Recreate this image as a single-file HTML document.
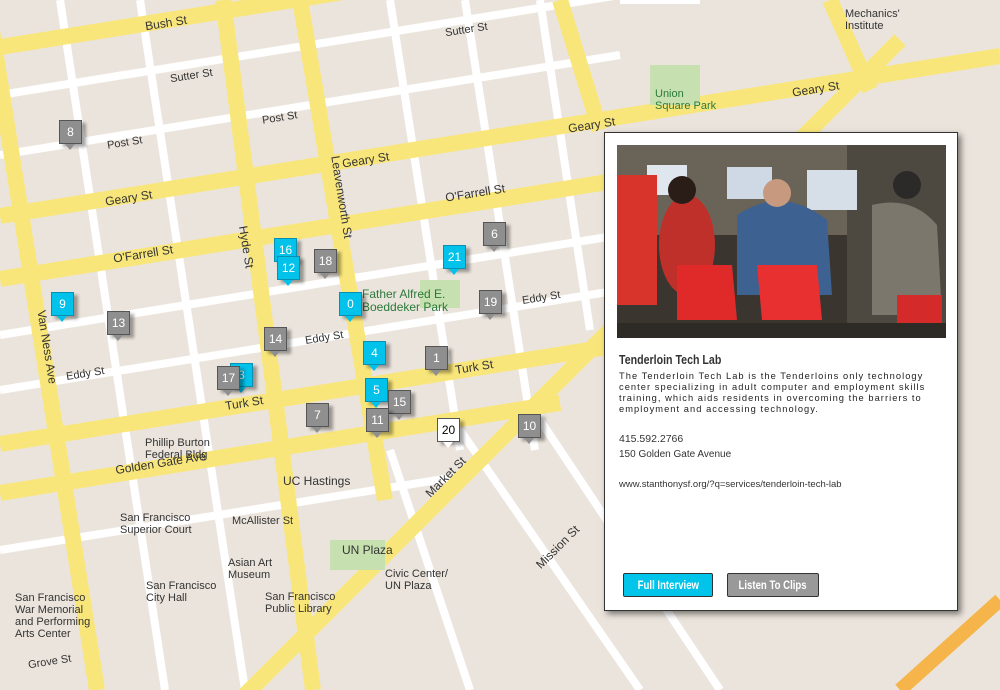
<!DOCTYPE html>
<html><head><meta charset="utf-8"><style>
body{margin:0;width:1000px;height:690px;overflow:hidden;background:#ebe4dc;font-family:"Liberation Sans",sans-serif;position:relative}
svg.map{position:absolute;left:0;top:0}
.m{position:absolute;width:23px;height:24px;border:1px solid #555;box-sizing:border-box;color:#fff;font-size:12px;text-align:center;line-height:23px;box-shadow:4px 3px 3px rgba(0,0,0,.35)}
.m:after{content:"";position:absolute;left:5px;bottom:-7px;width:0;height:0;border-left:5px solid transparent;border-right:5px solid transparent;border-top-width:6px;border-top-style:solid}
.g{background:#8f8f8f}.g:after{border-top-color:#8f8f8f}
.c{background:#00c2ea;border-color:#0a8fb0}.c:after{border-top-color:#00c2ea}
.w{background:#fff;color:#000}.w:after{border-top-color:#fff}
.lbl{position:absolute;font-size:11px;color:#333;white-space:nowrap}
#panel{position:absolute;left:604px;top:132px;width:354px;height:479px;background:#fff;border:1px solid #333;box-sizing:border-box;box-shadow:3px 3px 6px rgba(0,0,0,.5)}
.btn{position:absolute;top:440px;height:22px;border:1px solid #333;border-radius:2px;color:#fff;font-weight:bold;font-size:12px;line-height:22px;text-align:center;overflow:hidden}
.btn span{display:inline-block;transform:scaleX(.8)}
</style></head><body>
<svg class="map" width="1000" height="690">
<g stroke="#fff" stroke-width="8" fill="none">
<line x1="0" y1="95" x2="620" y2="-5"/><line x1="0" y1="155" x2="620" y2="55"/>
<line x1="0" y1="335" x2="620" y2="235"/><line x1="0" y1="390" x2="620" y2="290"/>
<line x1="0" y1="550" x2="450" y2="478"/>
<line x1="60" y1="0" x2="165" y2="690"/><line x1="140" y1="0" x2="245" y2="690"/>
<line x1="390" y1="0" x2="460" y2="450"/><line x1="465" y1="0" x2="535" y2="450"/><line x1="540" y1="0" x2="590" y2="330"/>
<line x1="390" y1="450" x2="470" y2="690"/><line x1="460" y1="430" x2="640" y2="690"/><line x1="540" y1="420" x2="720" y2="690"/>
<line x1="620" y1="0" x2="700" y2="0"/>
</g>
<g stroke="#f9e67a" stroke-width="16" fill="none" stroke-linecap="butt">
<line x1="0" y1="47" x2="630" y2="-54"/>
<line x1="0" y1="216" x2="1000" y2="56"/>
<line x1="0" y1="279" x2="620" y2="180"/>
<line x1="0" y1="444" x2="620" y2="345"/>
<line x1="0" y1="493" x2="560" y2="403"/>
<line x1="-13" y1="0" x2="97" y2="690"/>
<line x1="223" y1="0" x2="313" y2="690"/>
<line x1="300" y1="0" x2="385" y2="500"/>
<line x1="240" y1="700" x2="900" y2="40"/>
<line x1="830" y1="0" x2="870" y2="90"/>
<line x1="560" y1="0" x2="600" y2="130"/>
</g>
<g stroke="#f5b54a" stroke-width="14"><line x1="900" y1="690" x2="1000" y2="600"/></g>
<g fill="#c7e0b0"><rect x="650" y="65" width="50" height="40"/><rect x="420" y="280" width="40" height="28"/><rect x="330" y="540" width="55" height="30"/></g>
</svg>
<div class="lbl" style="left:145px;top:16px;font-size:12px;transform:rotate(-9deg)">Bush St</div>
<div class="lbl" style="left:445px;top:24px;transform:rotate(-9deg)">Sutter St</div>
<div class="lbl" style="left:170px;top:70px;transform:rotate(-9deg)">Sutter St</div>
<div class="lbl" style="left:262px;top:112px;transform:rotate(-9deg)">Post St</div>
<div class="lbl" style="left:107px;top:137px;transform:rotate(-9deg)">Post St</div>
<div class="lbl" style="left:342px;top:153px;font-size:12px;transform:rotate(-9deg)">Geary St</div>
<div class="lbl" style="left:105px;top:191px;font-size:12px;transform:rotate(-9deg)">Geary St</div>
<div class="lbl" style="left:568px;top:118px;font-size:12px;transform:rotate(-9deg)">Geary St</div>
<div class="lbl" style="left:792px;top:82px;font-size:12px;transform:rotate(-9deg)">Geary St</div>
<div class="lbl" style="left:445px;top:186px;font-size:12px;transform:rotate(-9deg)">O'Farrell St</div>
<div class="lbl" style="left:113px;top:247px;font-size:12px;transform:rotate(-9deg)">O'Farrell St</div>
<div class="lbl" style="left:305px;top:332px;transform:rotate(-9deg)">Eddy St</div>
<div class="lbl" style="left:522px;top:292px;transform:rotate(-9deg)">Eddy St</div>
<div class="lbl" style="left:66px;top:368px;transform:rotate(-9deg)">Eddy St</div>
<div class="lbl" style="left:455px;top:360px;font-size:12px;transform:rotate(-9deg)">Turk St</div>
<div class="lbl" style="left:225px;top:396px;font-size:12px;transform:rotate(-9deg)">Turk St</div>
<div class="lbl" style="left:115px;top:456px;font-size:12px;transform:rotate(-9deg)">Golden Gate Ave</div>
<div class="lbl" style="left:225px;top:240px;font-size:12px;transform:rotate(81deg)">Hyde St</div>
<div class="lbl" style="left:10px;top:340px;font-size:12px;transform:rotate(81deg)">Van Ness Ave</div>
<div class="lbl" style="left:300px;top:190px;font-size:12px;transform:rotate(81deg)">Leavenworth St</div>
<div class="lbl" style="left:420px;top:470px;font-size:12px;transform:rotate(-45deg)">Market St</div>
<div class="lbl" style="left:530px;top:540px;font-size:12px;transform:rotate(-45deg)">Mission St</div>
<div class="lbl" style="left:362px;top:288px;color:#2a7a3a;font-size:12px;line-height:13px">Father Alfred E.<br>Boeddeker Park</div>
<div class="lbl" style="left:655px;top:88px;color:#2a7a3a;line-height:12px">Union<br>Square Park</div>
<div class="lbl" style="left:145px;top:437px;line-height:12px">Phillip Burton<br>Federal Bldg</div>
<div class="lbl" style="left:283px;top:474px;font-size:12px">UC Hastings</div>
<div class="lbl" style="left:120px;top:512px;line-height:12px">San Francisco<br>Superior Court</div>
<div class="lbl" style="left:232px;top:515px">McAllister St</div>
<div class="lbl" style="left:342px;top:543px;font-size:12px">UN Plaza</div>
<div class="lbl" style="left:385px;top:568px;line-height:12px">Civic Center/<br>UN Plaza</div>
<div class="lbl" style="left:146px;top:580px;line-height:12px">San Francisco<br>City Hall</div>
<div class="lbl" style="left:265px;top:591px;line-height:12px">San Francisco<br>Public Library</div>
<div class="lbl" style="left:15px;top:592px;line-height:12px">San Francisco<br>War Memorial<br>and Performing<br>Arts Center</div>
<div class="lbl" style="left:28px;top:656px;transform:rotate(-9deg)">Grove St</div>
<div class="lbl" style="left:228px;top:557px;line-height:12px">Asian Art<br>Museum</div>
<div class="lbl" style="left:845px;top:8px;line-height:12px">Mechanics'<br>Institute</div>

<div class="m g" style="left:59px;top:120px">8</div>
<div class="m c" style="left:274px;top:238px">16</div>
<div class="m c" style="left:277px;top:256px">12</div>
<div class="m g" style="left:314px;top:249px">18</div>
<div class="m c" style="left:339px;top:292px">0</div>
<div class="m c" style="left:443px;top:245px">21</div>
<div class="m g" style="left:483px;top:222px">6</div>
<div class="m g" style="left:479px;top:290px">19</div>
<div class="m c" style="left:51px;top:292px">9</div>
<div class="m g" style="left:107px;top:311px">13</div>
<div class="m g" style="left:264px;top:327px">14</div>
<div class="m c" style="left:363px;top:341px">4</div>
<div class="m g" style="left:425px;top:346px">1</div>
<div class="m c" style="left:230px;top:363px">3</div>
<div class="m g" style="left:217px;top:366px">17</div>
<div class="m c" style="left:365px;top:378px">5</div>
<div class="m g" style="left:388px;top:390px">15</div>
<div class="m g" style="left:306px;top:403px">7</div>
<div class="m g" style="left:366px;top:408px">11</div>
<div class="m w" style="left:437px;top:418px">20</div>
<div class="m g" style="left:518px;top:414px">10</div>

<div id="panel">
<svg style="position:absolute;left:12px;top:12px" width="329" height="193">
<rect width="329" height="193" fill="#3b3530"/>
<rect x="0" y="0" width="329" height="90" fill="#6a6358"/>
<rect x="230" y="0" width="99" height="193" fill="#4d4840"/>
<rect x="30" y="20" width="40" height="30" fill="#dfe6ee"/><rect x="110" y="22" width="45" height="32" fill="#cfd9e6"/><rect x="190" y="25" width="50" height="40" fill="#d6dee8"/>
<rect x="0" y="30" width="40" height="130" fill="#d9342b"/>
<ellipse cx="70" cy="100" rx="28" ry="50" fill="#c0302a"/><circle cx="65" cy="45" r="14" fill="#2a1d18"/>
<path d="M120 70 Q165 40 210 75 L215 150 L120 150Z" fill="#3d6190"/><circle cx="160" cy="48" r="14" fill="#c79a80"/>
<path d="M60 120 h55 l5 55 h-60z" fill="#e02a2a"/><path d="M140 120 h60 l5 55 h-60z" fill="#e83030"/>
<path d="M255 60 Q295 50 320 80 L325 170 L255 170Z" fill="#7c776c"/><circle cx="290" cy="40" r="14" fill="#2b2a28"/>
<path d="M280 150 h45 v30 h-45z" fill="#d42a2a"/>
<rect x="0" y="178" width="329" height="15" fill="#2e2a26"/>
</svg>
<div style="position:absolute;left:14px;top:220px;font-weight:bold;font-size:12.5px;color:#333;transform:scaleX(.85);transform-origin:left">Tenderloin Tech Lab</div>
<div style="position:absolute;left:14px;top:238px;width:335px;font-size:9.3px;letter-spacing:1.05px;line-height:11px;color:#222">The Tenderloin Tech Lab is the Tenderloins only technology center specializing in adult computer and employment skills training, which aids residents in overcoming the barriers to employment and accessing technology.</div>
<div style="position:absolute;left:14px;top:300px;font-size:10.5px;color:#333">415.592.2766</div>
<div style="position:absolute;left:14px;top:316px;font-size:10px;color:#333">150 Golden Gate Avenue</div>
<div style="position:absolute;left:14px;top:346px;font-size:9.5px;color:#333">www.stanthonysf.org/?q=services/tenderloin-tech-lab</div>
<div class="btn" style="left:18px;width:88px;background:#00c4ea"><span>Full Interview</span></div>
<div class="btn" style="left:122px;width:90px;background:#999"><span>Listen To Clips</span></div>
</div>
</body></html>
